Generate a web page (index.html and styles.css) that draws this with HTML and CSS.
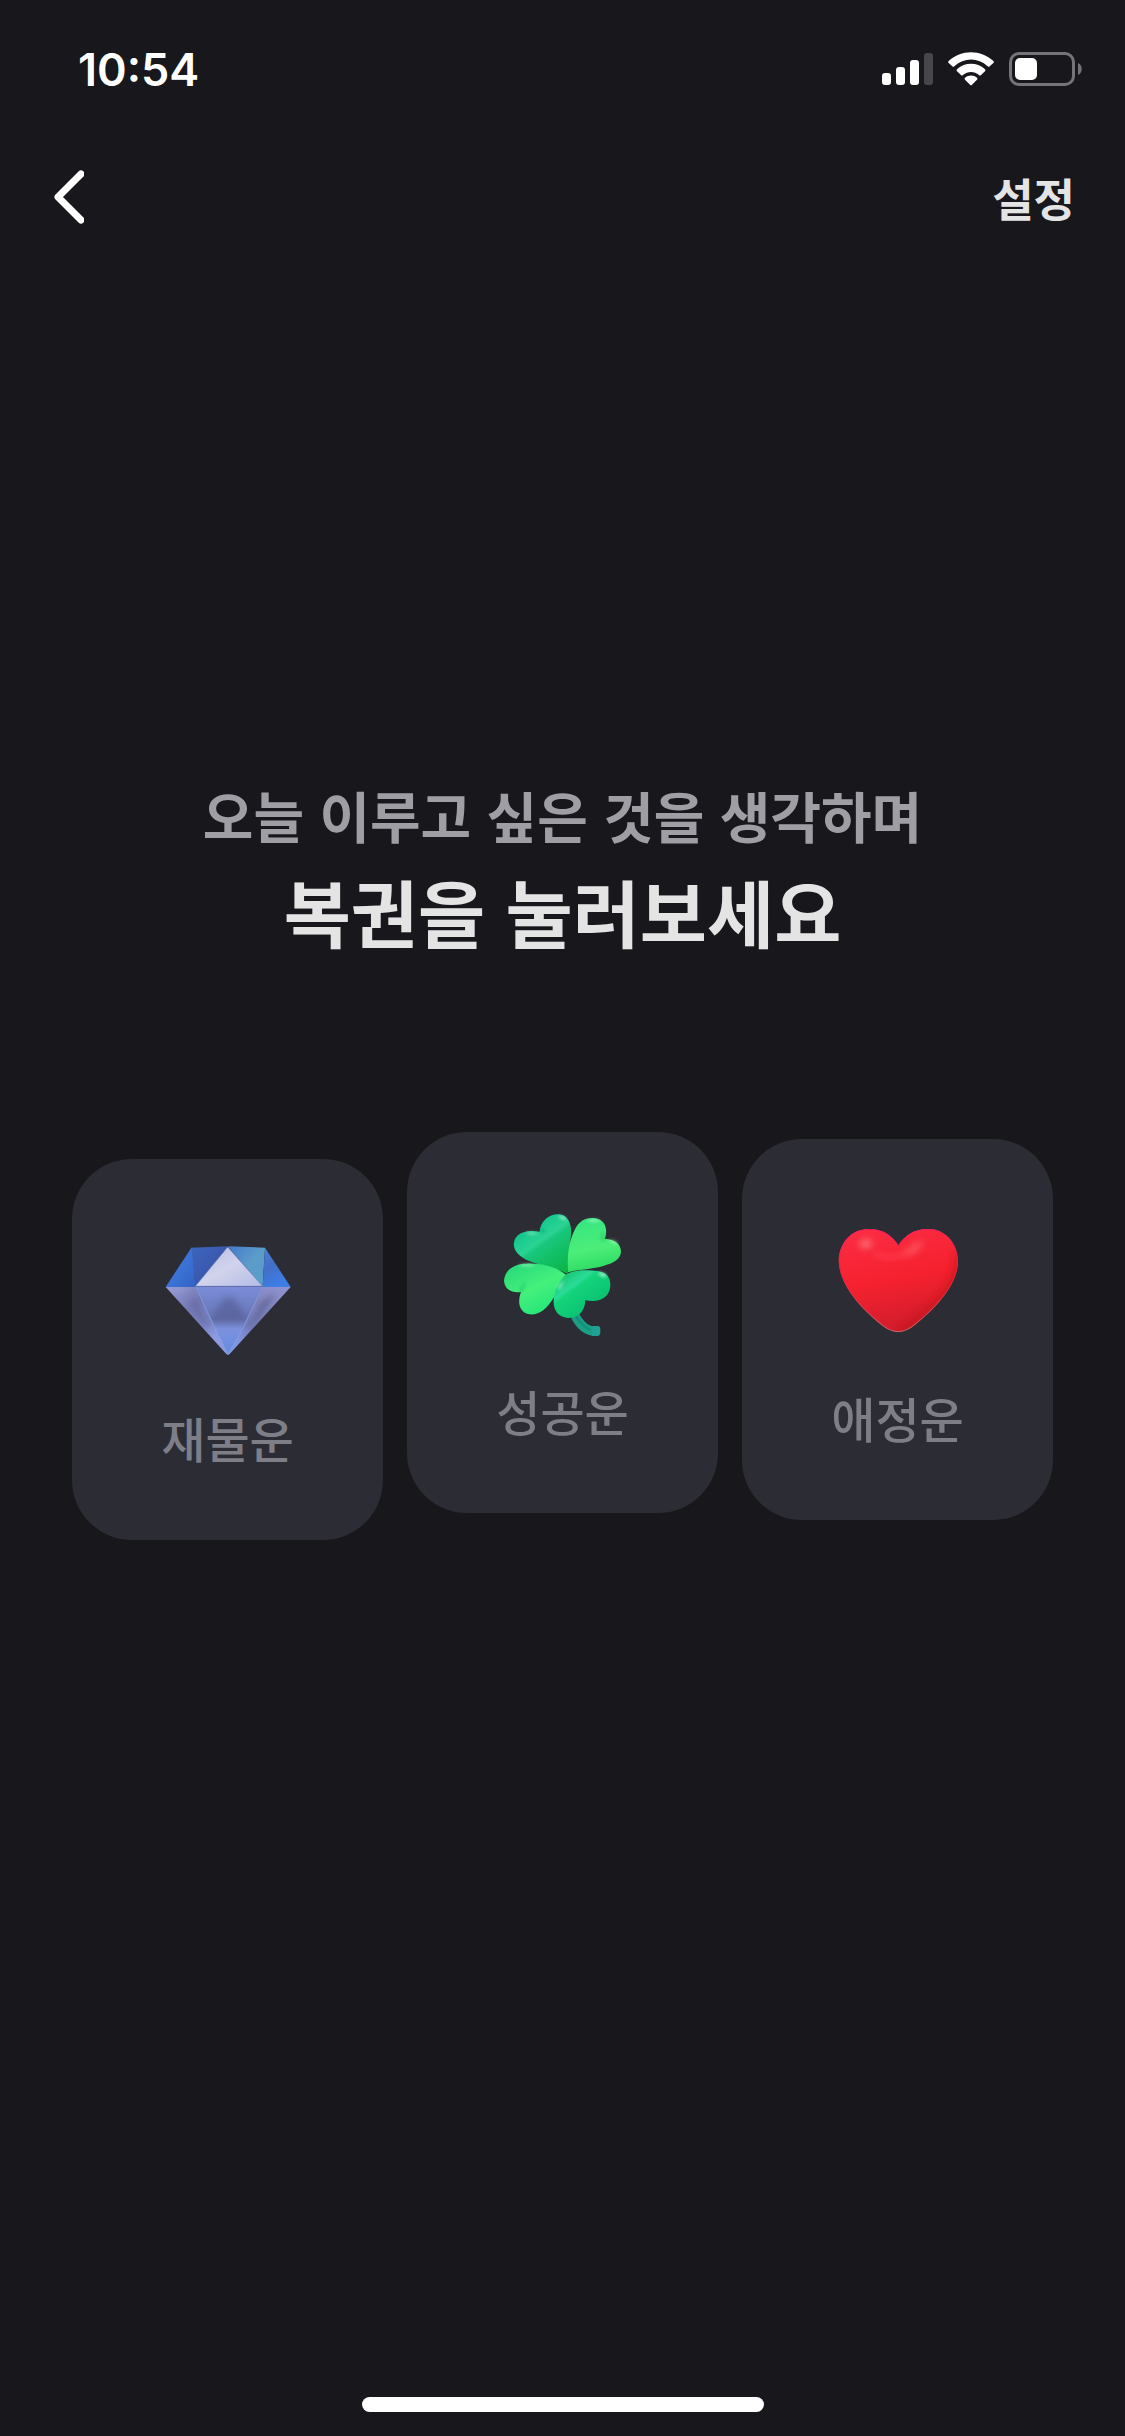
FILE: index.html
```html
<!DOCTYPE html>
<html lang="ko">
<head>
<meta charset="utf-8">
<meta name="viewport" content="width=device-width, initial-scale=1">
<title>복권</title>
<link rel="stylesheet" href="styles.css">
</head>
<body>

<div class="screen">
  <div class="status-bar">
    <span class="time">10:54</span>
    <div class="status-icons">
      <svg class="signal" viewBox="0 0 51 34" aria-hidden="true">
        <rect x="0" y="21" width="9" height="12" rx="3" fill="#fff"/>
        <rect x="14" y="15" width="9" height="18" rx="3" fill="#fff"/>
        <rect x="28" y="8" width="9" height="25" rx="3" fill="#fff"/>
        <rect x="42" y="1" width="9" height="32" rx="3" fill="#47464b"/>
      </svg>
      <svg class="wifi" viewBox="264 65 138 102" aria-hidden="true" fill="#fff">
        <path d="M266 92C303 57 363 57 400 92Q403 95 400 98L389 108Q386 111 383 108C354 81 312 81 283 108Q280 111 277 108L266 98Q263 95 266 92Z"/>
        <path d="M291 117C315 95 351 95 375 117Q378 120 375 123L363 134Q360 137 357 134C343 122 323 122 309 134Q306 137 303 134L291 123Q288 120 291 117Z"/>
        <path d="M315 142C325 133 341 133 351 142Q354 145 351 148L336 163Q333 166 330 163L315 148Q312 145 315 142Z"/>
      </svg>
      <svg class="battery" viewBox="0 0 73 34" aria-hidden="true">
        <rect x="1.5" y="1.5" width="63" height="31" rx="8.5" fill="none" stroke="#757478" stroke-width="3"/>
        <rect x="6" y="6" width="22" height="22" rx="5" fill="#fff"/>
        <path d="M69 11C74 13 74 21 69 23Z" fill="#757478"/>
      </svg>
    </div>
  </div>

  <header class="nav">
    <button class="back" type="button" aria-label="뒤로">
      <svg viewBox="0 0 30 54" aria-hidden="true">
        <path d="M27 4L4 27L27 50" fill="none" stroke="#fff" stroke-width="7" stroke-linecap="round" stroke-linejoin="round"/>
      </svg>
    </button>
    <button class="settings" type="button">설정</button>
  </header>

  <main class="content">
    <p class="subtitle">오늘 이루고 싶은 것을 생각하며</p>
    <h1 class="title">복권을 눌러보세요</h1>

    <div class="cards">
      <button class="card card-money" type="button">
        <svg class="card-icon" viewBox="313 358 378 378" aria-hidden="true">
          <defs>
            <linearGradient id="gemLeft" x1="0" y1="0" x2="1" y2="1">
              <stop offset="0" stop-color="#3763b8"/>
              <stop offset=".5" stop-color="#3b73d6"/>
              <stop offset="1" stop-color="#3263c4"/>
            </linearGradient>
            <linearGradient id="gemTopLeft" x1="0" y1="0" x2="1" y2="1">
              <stop offset="0" stop-color="#3c66bd"/>
              <stop offset="1" stop-color="#3a4da0"/>
            </linearGradient>
            <linearGradient id="gemWhite" x1="0" y1="0" x2="1" y2="1">
              <stop offset="0" stop-color="#b3b8e2"/>
              <stop offset=".5" stop-color="#d2d3ec"/>
              <stop offset="1" stop-color="#b2bce6"/>
            </linearGradient>
            <linearGradient id="gemTeal" x1="0" y1="0" x2="1" y2="1">
              <stop offset="0" stop-color="#4678cc"/>
              <stop offset=".5" stop-color="#5b9cc9"/>
              <stop offset="1" stop-color="#5a9ec7"/>
            </linearGradient>
            <linearGradient id="gemRight" x1="0" y1="0" x2=".4" y2="1">
              <stop offset="0" stop-color="#4a7fe0"/>
              <stop offset=".5" stop-color="#426fc4"/>
              <stop offset="1" stop-color="#3f7de6"/>
            </linearGradient>
            <linearGradient id="gemCenter" x1="0" y1="0" x2="0" y2="1">
              <stop offset="0" stop-color="#7c8cd8"/>
              <stop offset=".3" stop-color="#6e7ec2"/>
              <stop offset=".48" stop-color="#6874b0"/>
              <stop offset=".62" stop-color="#7c91dd"/>
              <stop offset="1" stop-color="#668be5"/>
            </linearGradient>
            <linearGradient id="gemSideL" gradientUnits="userSpaceOnUse" x1="340" y1="500" x2="470" y2="650">
              <stop offset="0" stop-color="#9497d0"/>
              <stop offset=".4" stop-color="#7479b4"/>
              <stop offset=".7" stop-color="#7b83c2"/>
              <stop offset="1" stop-color="#8e9be3"/>
            </linearGradient>
            <linearGradient id="gemSideR" gradientUnits="userSpaceOnUse" x1="670" y1="510" x2="530" y2="670">
              <stop offset="0" stop-color="#8f92d0"/>
              <stop offset=".4" stop-color="#8388c2"/>
              <stop offset=".7" stop-color="#7780bf"/>
              <stop offset="1" stop-color="#8396e2"/>
            </linearGradient>
            <filter id="gemBlur" x="-50%" y="-50%" width="200%" height="200%"><feGaussianBlur stdDeviation="10"/></filter>
            <clipPath id="gemClip"><path d="M315 502H690L506 704Q502 707 498 704Z"/></clipPath>
          </defs>
          <path d="M392 384L315 502H404L396 384Z" fill="url(#gemLeft)"/>
          <path d="M392 384L501 380L404 500Z" fill="url(#gemTopLeft)"/>
          <path d="M501 380L613 384L606 500Z" fill="url(#gemTeal)"/>
          <path d="M613 384L690 502H606Z" fill="url(#gemRight)"/>
          <path d="M501 382L404 500H606Z" fill="url(#gemWhite)"/>
          <path d="M315 502H404L470 640L502 706L497 703Z" fill="url(#gemSideL)"/>
          <path d="M690 502H606L540 640L502 706L507 703Z" fill="url(#gemSideR)"/>
          <path d="M404 500H606L540 640L502 706L470 640Z" fill="url(#gemCenter)"/>
          <g clip-path="url(#gemClip)">
            <path d="M450 605Q475 545 505 530Q535 545 560 605Z" fill="#535c92" opacity=".6" filter="url(#gemBlur)"/>
            <path d="M385 530L408 550L448 630L425 610Z" fill="#4e5488" opacity=".6" filter="url(#gemBlur)"/>
            <path d="M600 545L650 520L595 600L555 640Z" fill="#535884" opacity=".6" filter="url(#gemBlur)"/>
            <path d="M315 502H390L350 525Z" fill="#9fa0d8" opacity=".45" filter="url(#gemBlur)"/>
          </g>
          <path d="M404 500L470 640L502 704L540 640L606 500" fill="none" stroke="#8ba8f0" stroke-width="2.5"/>
          <path d="M404 500L501 382L606 500" fill="none" stroke="#7194e0" stroke-width="2"/>
          <path d="M404 500H606" stroke="#5865a8" stroke-width="2"/>
        </svg>
        <span class="card-label">재물운</span>
      </button>

      <button class="card card-success" type="button">
        <svg class="card-icon" viewBox="313 279 378 378" aria-hidden="true">
          <defs>
            <linearGradient id="leafDark" gradientUnits="userSpaceOnUse" x1="405" y1="310" x2="510" y2="460">
              <stop offset="0" stop-color="#0fc48c"/>
              <stop offset=".34" stop-color="#2bd394"/>
              <stop offset=".42" stop-color="#18c77c"/>
              <stop offset="1" stop-color="#0bb445"/>
            </linearGradient>
            <linearGradient id="leafLight" gradientUnits="userSpaceOnUse" x1="570" y1="300" x2="600" y2="450">
              <stop offset="0" stop-color="#36e681"/>
              <stop offset=".6" stop-color="#4cee78"/>
              <stop offset="1" stop-color="#2fdc64"/>
            </linearGradient>
            <linearGradient id="leafLeft" gradientUnits="userSpaceOnUse" x1="370" y1="440" x2="440" y2="585">
              <stop offset="0" stop-color="#2bdc79"/>
              <stop offset=".5" stop-color="#45f07c"/>
              <stop offset="1" stop-color="#24e679"/>
            </linearGradient>
            <linearGradient id="leafBottom" gradientUnits="userSpaceOnUse" x1="500" y1="460" x2="590" y2="580">
              <stop offset="0" stop-color="#11c26a"/>
              <stop offset=".34" stop-color="#2bdc98"/>
              <stop offset=".42" stop-color="#13d47a"/>
              <stop offset="1" stop-color="#08bf70"/>
            </linearGradient>
            <filter id="leafBlur" x="-50%" y="-50%" width="200%" height="200%"><feGaussianBlur stdDeviation="4"/></filter>
          </defs>
          <path d="M536 585Q560 637 601 637" fill="none" stroke="#1d9f86" stroke-width="27"/>
          <path d="M590 621H605Q614 621 614 630V641Q613 651 603 651H589Z" fill="#20a092"/>
          <path d="M540 590Q559 623 585 632" fill="none" stroke="#0b8d78" stroke-width="8" opacity=".7"/>
          <path d="M516 465C480 445 440 443 403 427C363 410 348 388 357 362C368 338 398 332 432 338C435 304 462 284 490 286C516 288 529 314 526 347C522 387 518 425 516 465Z" fill="url(#leafDark)"/>
          <path d="M517 460C514 406 520 367 538 331C551 305 572 294 600 298C626 303 639 327 627 360C655 359 676 374 676 398C674 421 655 431 625 440C590 451 550 450 517 460Z" fill="url(#leafLight)"/>
          <path d="M511 467C485 445 438 432 392 434C352 434 327 455 325 486C328 513 349 522 376 519C365 550 370 576 397 585C427 591 451 573 474 536C490 511 504 494 511 467Z" fill="url(#leafLeft)"/>
          <path d="M511 467C535 450 576 453 606 456C634 460 645 475 644 502C641 536 613 552 569 544C568 578 547 598 516 597C488 595 473 574 474 546C476 514 490 484 511 467Z" fill="url(#leafBottom)"/>
          <g filter="url(#leafBlur)" fill="#c9ffe0">
            <ellipse cx="500" cy="296" rx="12" ry="4" transform="rotate(20 500 296)" opacity=".7"/>
            <ellipse cx="594" cy="305" rx="20" ry="4" opacity=".6"/>
            <ellipse cx="653" cy="368" rx="14" ry="4" transform="rotate(20 653 368)" opacity=".5"/>
            <ellipse cx="620" cy="467" rx="13" ry="5" transform="rotate(25 620 467)" opacity=".8"/>
            <ellipse cx="408" cy="343" rx="18" ry="4" opacity=".5"/>
            <ellipse cx="394" cy="438" rx="25" ry="4" opacity=".5"/>
            <path d="M507 480L492 515L485 500Z" opacity=".5"/>
            <path d="M622 335L612 362L630 365Z" fill="#12bd59" opacity=".5"/>
            <path d="M377 520L391 488L371 512Z" fill="#10b955" opacity=".7"/>
            <path d="M433 340L452 342L435 320Z" fill="#079879" opacity=".4"/>
          </g>
        </svg>
        <span class="card-label">성공운</span>
      </button>

      <button class="card card-love" type="button">
        <svg class="card-icon" viewBox="313 300 378 378" aria-hidden="true">
          <defs>
            <linearGradient id="heartFill" x1=".3" y1="0" x2=".55" y2="1">
              <stop offset="0" stop-color="#fc2b42"/>
              <stop offset=".5" stop-color="#f5212f"/>
              <stop offset="1" stop-color="#ce1c2c"/>
            </linearGradient>
            <linearGradient id="heartEdge" x1="0" y1="0" x2="0" y2="1">
              <stop offset="0" stop-color="#f82162"/>
              <stop offset=".45" stop-color="#d52642"/>
              <stop offset="1" stop-color="#b9666d"/>
            </linearGradient>
            <filter id="heartBlur" x="-60%" y="-60%" width="220%" height="220%"><feGaussianBlur stdDeviation="11"/></filter>
            <clipPath id="heartClip"><path id="heartShape" d="M503 379C485 350 458 330 414 330C360 330 325 374 324 426C326 497 388 567 456 621C490 646 516 645 549 621C623 562 682 493 682 426C680 370 643 330 592 330C549 330 522 350 503 379Z"/></clipPath>
          </defs>
          <use href="#heartShape" fill="url(#heartFill)"/>
          <g clip-path="url(#heartClip)">
            <path d="M684 400Q678 490 630 540L510 640" fill="none" stroke="#c21719" stroke-width="22" opacity=".6" filter="url(#heartBlur)"/>
            <ellipse cx="405" cy="374" rx="20" ry="15" fill="#ff8587" opacity=".7" filter="url(#heartBlur)"/>
            <path d="M518 402Q540 368 580 365Q574 398 518 416Z" fill="#ff6c70" opacity=".6" filter="url(#heartBlur)"/>
            <path d="M430 400Q475 430 520 405" fill="none" stroke="#ff4c58" stroke-width="14" opacity=".6" filter="url(#heartBlur)"/>
            <use href="#heartShape" fill="none" stroke="url(#heartEdge)" stroke-width="5"/>
          </g>
        </svg>
        <span class="card-label">애정운</span>
      </button>
    </div>
  </main>

  <div class="home-indicator"></div>
</div>

</body>
</html>
```
FILE: styles.css
```css
* {
  box-sizing: border-box;
}

body {
  margin: 0;
  background-color: #17171c;
  color: #e4e4e5;
  font-family: "Noto Sans CJK KR", sans-serif;
}

button {
  padding: 0;
  border: none;
  background: none;
  color: inherit;
  font-family: inherit;
  cursor: pointer;
}

svg {
  display: block;
}

.screen {
  display: flex;
  flex-direction: column;
  min-height: 100vh;
}

/* status bar */
.status-bar {
  display: flex;
  align-items: center;
  justify-content: space-between;
  height: 138px;
  padding: 0 43px 0 78px;
}

.time {
  color: #fff;
  font-family: Inter, sans-serif;
  font-size: 45px;
  font-weight: 600;
}

.status-icons {
  display: flex;
  align-items: center;
  gap: 15px;
}

.signal {
  width: 51px;
  height: 34px;
}

.wifi {
  width: 46px;
  height: 34px;
}

.battery {
  width: 73px;
  height: 34px;
}

/* top navigation */
.nav {
  display: flex;
  align-items: center;
  justify-content: space-between;
  height: 118px;
  padding: 0 50px 0 54px;
}

.back svg {
  width: 30px;
  height: 54px;
}

.settings {
  font-size: 45px;
  font-weight: 700;
}

/* content */
.content {
  flex: 1;
  padding: 516px 72px 0;
  text-align: center;
}

.subtitle {
  margin: 0;
  color: #9e9ea4;
  font-size: 55px;
  font-weight: 700;
  line-height: 84px;
}

.title {
  margin: 0;
  font-size: 73px;
  font-weight: 700;
  line-height: 108px;
}

.cards {
  display: flex;
  align-items: flex-start;
  gap: 24px;
  margin-top: 168px;
}

.card {
  display: flex;
  flex: 1;
  flex-direction: column;
  align-items: center;
  gap: 36px;
  padding: 80px 0 67px;
  border-radius: 60px;
  background-color: #2c2c35;
}

/* the cards float at different heights */
.card-money {
  margin-top: 27px;
}

.card-love {
  margin-top: 7px;
}

.card-icon {
  width: 126px;
  height: 126px;
}

.card-label {
  color: #7e7e87;
  font-size: 48px;
  font-weight: 500;
  line-height: 72px;
}

.home-indicator {
  width: 402px;
  height: 15px;
  margin: 0 auto 24px;
  border-radius: 8px;
  background-color: #fff;
}
```
